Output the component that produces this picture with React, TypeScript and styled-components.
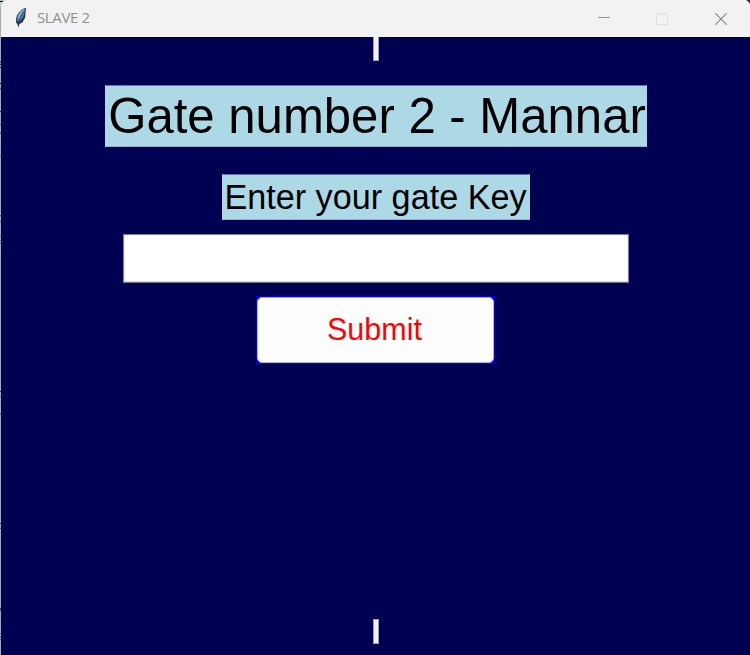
import React from "react";
import styled, { createGlobalStyle } from "styled-components";

const GlobalStyle = createGlobalStyle`
  * { box-sizing: border-box; }
  body { margin: 0; overflow: hidden; background: #a9a9ab; }
`;

const Desktop = styled.div`
  position: relative;
  width: 750px;
  height: 655px;
  padding-left: 1px;
  background: #a9a9ab;
  overflow: hidden;
`;

const Speck = styled.i<{ $top: number; $color: string }>`
  position: absolute;
  left: 0;
  top: ${(p) => p.$top}px;
  width: 1px;
  height: 1px;
  background: ${(p) => p.$color};
`;

const Corner = styled.svg<{ $right?: boolean }>`
  position: absolute;
  top: 0;
  ${(p) => (p.$right ? "right: 0;" : "left: 0;")}
`;

const Window = styled.main`
  display: flex;
  flex-direction: column;
  height: 655px;
  background: #000053;
  font-family: "Liberation Sans", Arial, sans-serif;
  font-kerning: none;
`;

const TitleBar = styled.header`
  display: flex;
  align-items: center;
  height: 37px;
  flex: none;
  padding-left: 12px;
  background: #f2f2f2;
`;

const Title = styled.span`
  flex: 1;
  margin-left: 8px;
  padding-bottom: 3px;
  font: 15px/20px "Open Sans", sans-serif;
  letter-spacing: -0.38px;
  color: #909090;
`;

const Control = styled.button`
  display: grid;
  place-items: center;
  width: 58.5px;
  height: 36px;
  padding: 0;
  border: 0;
  background: none;
`;

const Canvas = styled.section`
  display: flex;
  flex-direction: column;
  align-items: center;
  flex: 1;
`;

const Tick = styled.div<{ $bottom?: boolean }>`
  width: 6px;
  height: ${(p) => (p.$bottom ? 25 : 24)}px;
  border: 1px solid #9c9cba;
  border-top-width: ${(p) => (p.$bottom ? 1 : 0)}px;
  background: #f0f0f0;
  ${(p) => p.$bottom && "margin: auto 0 11px;"}
`;

const Label = styled.div<{ $w: number; $h: number; $size: number; $gap: number }>`
  width: ${(p) => p.$w}px;
  height: ${(p) => p.$h}px;
  margin-top: ${(p) => p.$gap}px;
  font-size: ${(p) => p.$size}px;
  line-height: ${(p) => p.$h - 2}px;
  text-align: center;
  white-space: nowrap;
  color: #000;
  background: #add8e6;
  border: 1px solid #add8e6;
  border-top-color: #62799f;
  border-bottom-color: #8fb2cb;
`;

const Heading = styled(Label)`
  margin-left: 1px;
  padding-left: 2px;
`;

const KeyInput = styled.input`
  width: 506px;
  height: 49px;
  margin-top: 14px;
  padding: 0 4px;
  border: 1px solid #8080a3;
  border-bottom-color: #777781;
  border-radius: 0;
  outline: 0;
  background: #fff;
  box-shadow: inset 0 -1px #d4d4d4, inset -1px 0 #ededed, inset 1px 0 #ededed;
  font: 30px "Liberation Sans", sans-serif;
`;

const ButtonFrame = styled.div`
  width: 239px;
  height: 68px;
  margin-top: 13px;
  padding: 1px;
  background: #0000f0;
`;

const Submit = styled.button`
  display: block;
  width: 100%;
  height: 100%;
  padding: 0 2px 1px 0;
  border: 1px solid #b0b0da;
  border-radius: 5px;
  background: #fdfdfd;
  color: #f00;
  font: 30.5px "Liberation Sans", sans-serif;
  font-kerning: none;
`;

const specks: [number, string][] = [
  [61, "#704838"], [62, "#555"], [64, "#222"], [67, "#333"], [83, "#111"],
  [88, "#654"], [89, "#976437"], [111, "#222"], [124, "#357"], [132, "#a65b32"],
  [133, "#456"], [155, "#367d7d"], [215, "#555"], [221, "#655"], [235, "#367d7d"],
  [240, "#087f80"], [243, "#39888b"], [391, "#222"], [396, "#555"], [413, "#4c83aa"],
  [414, "#3c80b0"], [523, "#333"], [528, "#555"], [608, "#166766"], [609, "#345"],
  [610, "#754"], [633, "#367d7d"], [636, "#087f80"], [639, "#266"],
];

export default function App() {
  return (
    <Desktop>
      <GlobalStyle />
      <Window>
        <TitleBar>
          <svg width="16" height="24" viewBox="0 0 16 24">
            <path d="M13 .8C8.8 1.4 4.2 6.4 3.2 11.2l-.2 4.3 1.5 1.8.8 3.2 1.2-3.5 2.9-1.5 2.7-4.8z" fill="#30363f" />
            <path d="M12.2 1.7C8.4 3.2 5 7.2 4.1 11.7l.2 2.9 3-1.2 3.4-4.2z" fill="#427dbd" />
            <path d="M11.6 2.6C8.8 4 6.2 7.5 5.4 11" fill="none" stroke="#80b1df" strokeWidth="1.8" />
            <path d="m11.8 3-5.5 9.8-1.2 6" fill="none" stroke="#354b68" strokeWidth=".7" />
          </svg>
          <Title>SLAVE 2</Title>
          <Control aria-label="Minimize">
            <svg width="12" height="12"><path d="M0 4.5h12" stroke="#919191" /></svg>
          </Control>
          <Control aria-label="Maximize">
            <svg width="12" height="12"><rect x=".5" y=".5" width="11" height="11" rx="1" fill="none" stroke="#dedede" /></svg>
          </Control>
          <Control aria-label="Close">
            <svg width="12" height="12"><path d="m.3.3 11.4 11.4M11.7.3.3 11.7" stroke="#858585" strokeWidth="1.2" /></svg>
          </Control>
        </TitleBar>
        <Canvas>
          <Tick />
          <Heading $w={542} $h={62} $size={49.1} $gap={24}>Gate number 2 - Mannar</Heading>
          <Label $w={308} $h={46} $size={34.2} $gap={27}>Enter your gate Key</Label>
          <KeyInput aria-label="Gate key" />
          <ButtonFrame><Submit>Submit</Submit></ButtonFrame>
          <Tick $bottom />
        </Canvas>
      </Window>
      {specks.map(([top, color]) => <Speck key={top} $top={top} $color={color} />)}
      <Corner width="6" height="6"><path d="M0 0h6Q1.5 1 1 6H0z" fill="#b7c9c5" /><path d="M0 1.5h3" stroke="#111" /></Corner>
      <Corner $right width="5" height="5"><path d="M1 0h4v4Q4 1.5 1 0z" fill="#333" /></Corner>
    </Desktop>
  );
}
